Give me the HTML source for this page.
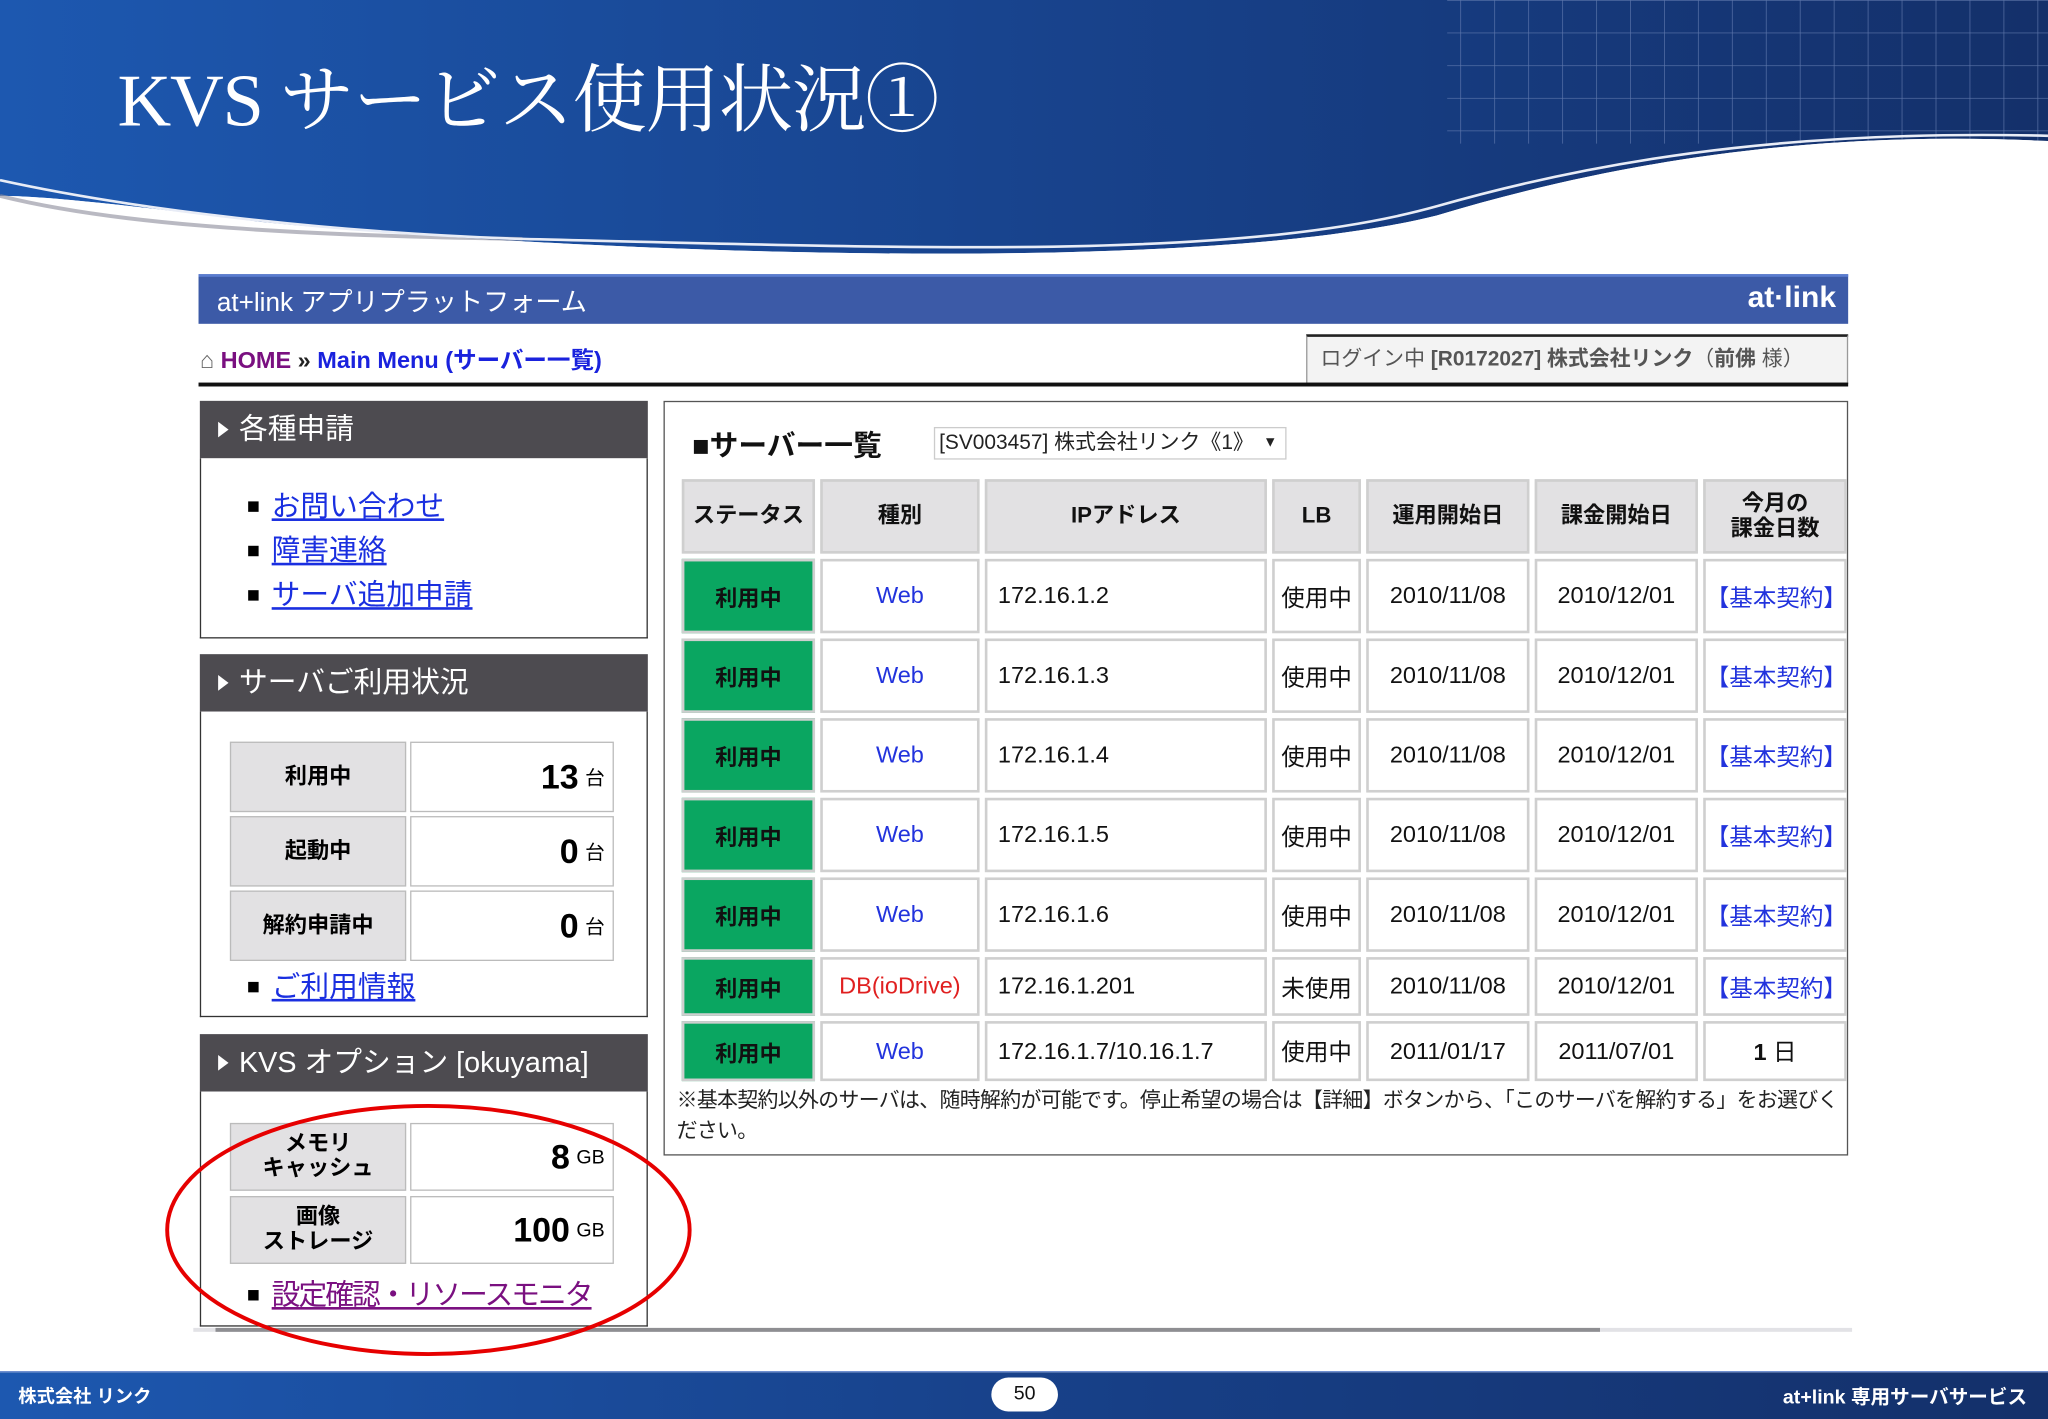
<!DOCTYPE html>
<html><head><meta charset="utf-8">
<style>
html,body{margin:0;padding:0;width:2048px;height:1418px;overflow:hidden;background:#fff}
#w{position:absolute;left:0;top:0;width:1568px;height:1086px;transform:scale(1.30612,1.30571);transform-origin:0 0;font-family:"Liberation Sans","Noto Sans CJK JP",sans-serif;}
.a{position:absolute}
.ph{position:absolute;left:153px;width:343px;height:44px;background:#4d4b50;color:#fff;font-size:22px;line-height:44px;}
.ph:before{content:"";display:inline-block;border-left:8px solid #fff;border-top:6px solid transparent;border-bottom:6px solid transparent;margin:0 8px 0 14px;vertical-align:1px}
.pb{position:absolute;left:153px;width:341px;border:1px solid #333;border-top:none;background:#fff}
.lk{position:absolute;left:190px;font-size:22px;color:#1a2fe0}
.lk:before{content:"";display:inline-block;width:8px;height:8px;background:#000;margin-right:10px;vertical-align:3px}
.lk span{text-decoration:underline}
.lc{position:absolute;left:176px;width:133px;background:#e2e1e3;border:1px solid #bbb;font-weight:bold;font-size:17px;text-align:center;display:flex;align-items:center;justify-content:center;line-height:1.1}
.vc{position:absolute;left:314px;width:156px;background:#fff;border:1px solid #bbb;text-align:right;font-size:26px;font-weight:bold;display:flex;align-items:center;justify-content:flex-end;padding-right:6px;box-sizing:border-box}
.vc small{font-size:15px;font-weight:normal;margin-left:5px}
#clip{position:absolute;left:509px;top:360px;width:905px;height:470px;overflow:hidden}
table.t{position:absolute;left:9px;top:3px;border-collapse:separate;border-spacing:4px 4px;table-layout:fixed;width:900px;font-size:18px}
table.t td{border:2px solid #cfcfcf;padding:0;text-align:center;color:#111;background:#fff;box-sizing:border-box}
table.t tr.h td{background:#e2e1e3;font-weight:bold;font-size:17px;line-height:1.1}
td.g{background:#0aa661 !important;font-weight:bold;font-size:17px}
td.b{color:#2233dd !important}
td.l{text-align:left !important;padding-left:8px !important}
</style></head><body><div id="w">
<svg class="a" style="left:0;top:0" width="1568" height="200" viewBox="0 0 1568 200">
<defs><linearGradient id="bg" x1="0" y1="0" x2="1" y2="0"><stop offset="0" stop-color="#1d58b0"/><stop offset="0.6" stop-color="#173f86"/><stop offset="1" stop-color="#14306a"/></linearGradient>
<pattern id="gr" width="26" height="25" patternUnits="userSpaceOnUse"><path d="M0 0H26M0 0V25" stroke="#6f86b8" stroke-width="1" fill="none"/></pattern></defs>
<path d="M0 0H1568V108C1400 100 1250 120 1100 165C900 215 400 190 200 170C120 160 40 150 0 150Z" fill="url(#bg)"/>
<rect x="1108" y="0" width="460" height="110" fill="url(#gr)" opacity="0.8"/>
<path d="M0 150C40 150 120 160 200 170C400 190 900 215 1100 165C1250 120 1400 100 1568 108V112C1400 108 1250 128 1100 172C900 222 400 196 200 178C120 168 40 160 0 160Z" fill="#fff"/>
<path d="M0 150C80 170 200 180 400 183" stroke="#8a8a9a" stroke-width="3" fill="none" opacity="0.6"/>
<path d="M0 138C100 160 250 178 400 183C700 190 950 200 1100 158C1250 115 1400 100 1568 104" stroke="#e8ecf6" stroke-width="2" fill="none"/>
</svg>
<div class="a" style="left:90px;top:44px;color:#fff;font-family:'Liberation Serif','Noto Serif CJK SC',serif;font-size:57px;line-height:68px;letter-spacing:-1px">KVS サービス使用状況①</div>

<div class="a" style="left:152px;top:210px;width:1263px;height:38px;background:#3c5aa7;border-top:2px solid #5a7cd0;box-sizing:border-box"></div>
<div class="a" style="left:166px;top:215px;color:#fff;font-size:20px">at+link アプリプラットフォーム</div>
<div class="a" style="left:1338px;top:214px;color:#fff;font-size:23px;font-weight:bold">at·link</div>

<div class="a" style="left:153px;top:262px;font-size:18px;font-weight:bold"><span style="color:#666">⌂</span> <span style="color:#7a1080">HOME</span> <span style="color:#222">»</span> <span style="color:#1a22dd">Main Menu (サーバー一覧)</span></div>
<div class="a" style="left:1000px;top:256px;width:415px;height:38px;background:#f3f3f3;border:1px solid #999;border-top:2px solid #222;box-sizing:border-box;color:#555;font-size:16px;line-height:36px;padding-left:10px">ログイン中 <b>[R0172027] 株式会社リンク</b>（<b>前佛</b> 様）</div>
<div class="a" style="left:152px;top:293px;width:1263px;height:3px;background:#111"></div>

<div class="ph" style="top:307px">各種申請</div>
<div class="pb" style="top:351px;height:137px"></div>
<div class="lk" style="top:370px"><span>お問い合わせ</span></div>
<div class="lk" style="top:404px"><span>障害連絡</span></div>
<div class="lk" style="top:438px"><span>サーバ追加申請</span></div>

<div class="ph" style="top:501px">サーバご利用状況</div>
<div class="pb" style="top:545px;height:233px"></div>
<div class="lc" style="top:568px;height:52px">利用中</div><div class="vc" style="top:568px;height:54px">13<small>台</small></div>
<div class="lc" style="top:625px;height:52px">起動中</div><div class="vc" style="top:625px;height:54px">0<small>台</small></div>
<div class="lc" style="top:682px;height:52px">解約申請中</div><div class="vc" style="top:682px;height:54px">0<small>台</small></div>
<div class="lk" style="top:738px"><span>ご利用情報</span></div>

<div class="ph" style="top:792px">KVS オプション [okuyama]</div>
<div class="pb" style="top:836px;height:179px"></div>
<div class="lc" style="top:860px;height:50px">メモリ<br>キャッシュ</div><div class="vc" style="top:860px;height:52px">8<small>GB</small></div>
<div class="lc" style="top:916px;height:50px">画像<br>ストレージ</div><div class="vc" style="top:916px;height:52px">100<small>GB</small></div>
<div class="lk" style="top:974px;color:#7a1080;letter-spacing:-1.5px"><span>設定確認・リソースモニタ</span></div>

<div class="a" style="left:148px;top:1017px;width:1270px;height:3px;background:#e2e2e6"></div>
<div class="a" style="left:165px;top:1017px;width:1060px;height:3px;background:#8e8e92"></div>

<div class="a" style="left:508px;top:307px;width:907px;height:578px;border:1px solid #555;box-sizing:border-box;background:#fff"></div>
<div class="a" style="left:530px;top:324px;font-size:22px;font-weight:bold;color:#111">■サーバー一覧</div>
<div class="a" style="left:715px;top:327px;width:270px;height:25px;border:1px solid #ccc;box-sizing:border-box;font-size:16px;line-height:23px;padding-left:3px;color:#222">[SV003457] 株式会社リンク《1》<span style="position:absolute;right:6px;font-size:11px">▼</span></div>

<div id="clip">
<table class="t">
<colgroup><col style="width:102px"><col style="width:122px"><col style="width:216px"><col style="width:68px"><col style="width:125px"><col style="width:125px"><col style="width:110px"></colgroup>
<tr class="h" style="height:57px"><td>ステータス</td><td>種別</td><td>IPアドレス</td><td>LB</td><td>運用開始日</td><td>課金開始日</td><td>今月の<br>課金日数</td></tr>
<tr style="height:57px"><td class="g">利用中</td><td class="b">Web</td><td class="l">172.16.1.2</td><td>使用中</td><td>2010/11/08</td><td>2010/12/01</td><td class="b">【基本契約】</td></tr>
<tr style="height:57px"><td class="g">利用中</td><td class="b">Web</td><td class="l">172.16.1.3</td><td>使用中</td><td>2010/11/08</td><td>2010/12/01</td><td class="b">【基本契約】</td></tr>
<tr style="height:57px"><td class="g">利用中</td><td class="b">Web</td><td class="l">172.16.1.4</td><td>使用中</td><td>2010/11/08</td><td>2010/12/01</td><td class="b">【基本契約】</td></tr>
<tr style="height:57px"><td class="g">利用中</td><td class="b">Web</td><td class="l">172.16.1.5</td><td>使用中</td><td>2010/11/08</td><td>2010/12/01</td><td class="b">【基本契約】</td></tr>
<tr style="height:57px"><td class="g">利用中</td><td class="b">Web</td><td class="l">172.16.1.6</td><td>使用中</td><td>2010/11/08</td><td>2010/12/01</td><td class="b">【基本契約】</td></tr>
<tr style="height:45px"><td class="g">利用中</td><td style="color:#e02020">DB(ioDrive)</td><td class="l">172.16.1.201</td><td>未使用</td><td>2010/11/08</td><td>2010/12/01</td><td class="b">【基本契約】</td></tr>
<tr style="height:46px"><td class="g">利用中</td><td class="b">Web</td><td class="l">172.16.1.7/10.16.1.7</td><td>使用中</td><td>2011/01/17</td><td>2011/07/01</td><td><b>1</b> 日</td></tr>
</table>
</div>
<div class="a" style="left:518px;top:832px;width:890px;font-size:16px;line-height:23px;color:#222;letter-spacing:-0.5px">※基本契約以外のサーバは、随時解約が可能です。停止希望の場合は【詳細】ボタンから、「このサーバを解約する」をお選びください。</div>

<svg class="a" style="left:0;top:0" width="1568" height="1086"><ellipse cx="328" cy="942" rx="200" ry="95" fill="none" stroke="#e60000" stroke-width="3"/></svg>

<div class="a" style="left:0;top:1050px;width:1568px;height:36px;background:linear-gradient(90deg,#1d58b0,#173f86 55%,#14306a);border-top:1px solid #6f8fcf"></div>
<div class="a" style="left:14px;top:1059px;color:#fff;font-size:14px;font-weight:bold">株式会社 リンク</div>
<div class="a" style="left:759px;top:1055px;width:51px;height:26px;background:#fff;border-radius:13px;text-align:center;font-size:15px;line-height:26px;color:#111">50</div>
<div class="a" style="right:16px;top:1059px;color:#fff;font-size:15px;font-weight:bold">at+link 専用サーバサービス</div>
</div></body></html>
